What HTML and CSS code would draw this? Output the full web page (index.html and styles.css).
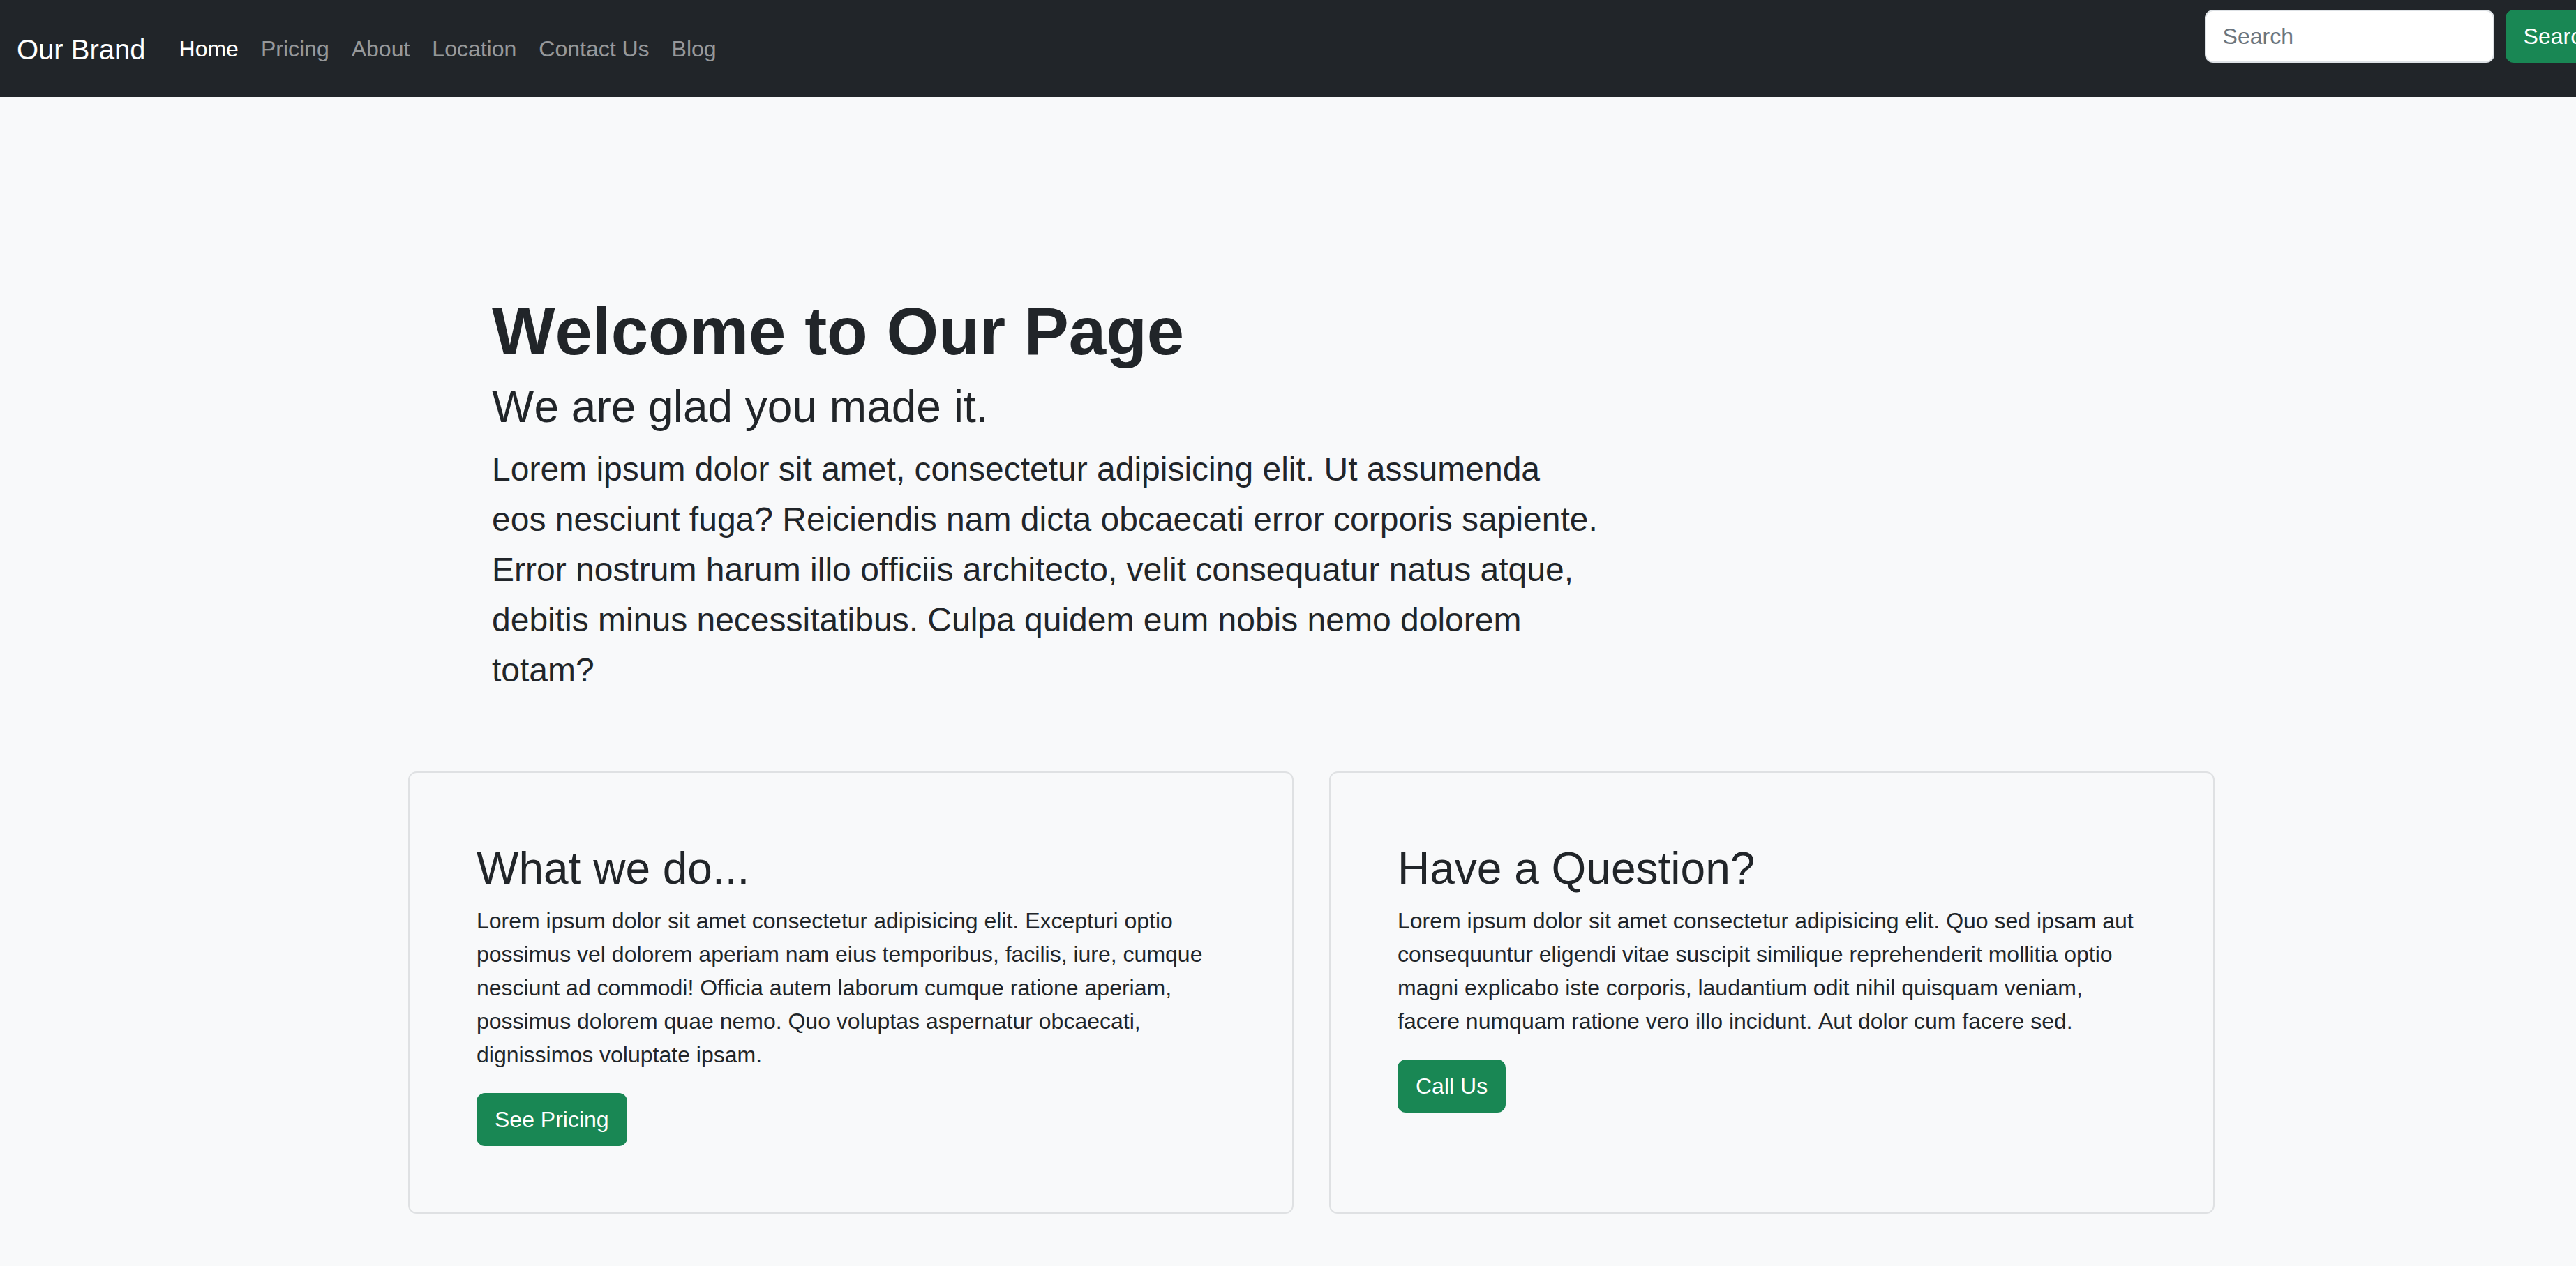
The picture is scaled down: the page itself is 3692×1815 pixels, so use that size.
FILE: index.html
```html
<!DOCTYPE html>
<html lang="en">
<head>
<meta charset="utf-8">
<title>Our Brand</title>
<link rel="stylesheet" href="styles.css">
</head>
<body>
<div class="page">
  <nav class="navbar">
    <a class="brand" href="#">Our Brand</a>
    <ul class="nav">
      <li><a class="nav-link active" href="#">Home</a></li>
      <li><a class="nav-link" href="#">Pricing</a></li>
      <li><a class="nav-link" href="#">About</a></li>
      <li><a class="nav-link" href="#">Location</a></li>
      <li><a class="nav-link" href="#">Contact Us</a></li>
      <li><a class="nav-link" href="#">Blog</a></li>
    </ul>
    <form class="search">
      <input class="search-input" type="text" placeholder="Search">
      <button class="btn btn-success" type="submit">Search</button>
    </form>
  </nav>

  <main class="container">
    <section class="hero">
      <h1 class="hero-title">Welcome to Our Page</h1>
      <h2 class="hero-subtitle">We are glad you made it.</h2>
      <p class="lead">Lorem ipsum dolor sit amet, consectetur adipisicing elit. Ut assumenda eos nesciunt fuga? Reiciendis nam dicta obcaecati error corporis sapiente. Error nostrum harum illo officiis architecto, velit consequatur natus atque, debitis minus necessitatibus. Culpa quidem eum nobis nemo dolorem totam?</p>
    </section>

    <section class="cards">
      <article class="card">
        <div class="card-body">
          <h2 class="card-title">What we do...</h2>
          <p class="card-text">Lorem ipsum dolor sit amet consectetur adipisicing elit. Excepturi optio possimus vel dolorem aperiam nam eius temporibus, facilis, iure, cumque nesciunt ad commodi! Officia autem laborum cumque ratione aperiam, possimus dolorem quae nemo. Quo voluptas aspernatur obcaecati, dignissimos voluptate ipsam.</p>
          <a class="btn btn-success" href="#">See Pricing</a>
        </div>
      </article>
      <article class="card">
        <div class="card-body">
          <h2 class="card-title">Have a Question?</h2>
          <p class="card-text">Lorem ipsum dolor sit amet consectetur adipisicing elit. Quo sed ipsam aut consequuntur eligendi vitae suscipit similique reprehenderit mollitia optio magni explicabo iste corporis, laudantium odit nihil quisquam veniam, facere numquam ratione vero illo incidunt. Aut dolor cum facere sed.</p>
          <a class="btn btn-success" href="#">Call Us</a>
        </div>
      </article>
    </section>
  </main>
</div>
</body>
</html>
```

FILE: styles.css
```css
html {
  overflow: hidden;
}

body {
  margin: 0;
  background: #f8f9fa;
  color: #212529;
  font-family: "Liberation Sans", Arial, sans-serif;
  font-kerning: none;
}

.page {
  width: 3762px;
}

/* ---------- navbar ---------- */
.navbar {
  display: flex;
  align-items: flex-start;
  height: 139px;
  padding: 0 18px 0 24px;
  box-sizing: border-box;
  background: #212529;
}

.brand {
  margin-top: 41px;
  margin-right: 32px;
  font-size: 40px;
  line-height: 60px;
  color: #fff;
  text-decoration: none;
  white-space: nowrap;
}

.nav {
  display: flex;
  margin: 46px 0 0;
  padding: 0;
  list-style: none;
}

.nav-link {
  display: block;
  padding: 0 16px;
  font-size: 32px;
  line-height: 48px;
  color: rgba(255, 255, 255, 0.55);
  text-decoration: none;
  white-space: nowrap;
}

.nav-link.active {
  color: #fff;
}

.search {
  display: flex;
  gap: 16px;
  margin: 14px 0 0 auto;
}

.search-input {
  width: 415px;
  height: 76px;
  box-sizing: border-box;
  padding: 0 24px;
  border: 2px solid #dee2e6;
  border-radius: 12px;
  background: #fff;
  font-family: inherit;
  font-size: 32px;
  color: #212529;
  outline: none;
}

.search-input::placeholder {
  color: #6c757d;
}

/* ---------- buttons ---------- */
.btn {
  display: inline-block;
  height: 76px;
  box-sizing: border-box;
  padding: 12px 24px;
  border: 2px solid transparent;
  border-radius: 12px;
  font-family: inherit;
  font-size: 32px;
  line-height: 48px;
  text-decoration: none;
  white-space: nowrap;
  cursor: pointer;
}

.btn-success {
  background: #198754;
  border-color: #198754;
  color: #fff;
}

/* ---------- main ---------- */
.container {
  width: 2592px;
  margin: 0 auto;
}

.hero {
  padding: 278px 0 0 120px;
}

.hero-title {
  margin: 0 0 13px;
  font-size: 96px;
  font-weight: 700;
  line-height: 1.2;
}

.hero-subtitle {
  margin: 0 0 15px;
  font-size: 64px;
  font-weight: 400;
  line-height: 1.2;
}

.lead {
  width: 1589px;
  margin: 0;
  font-size: 48px;
  line-height: 72px;
}

/* ---------- cards ---------- */
.cards {
  display: grid;
  grid-template-columns: 1269px 1269px;
  column-gap: 51px;
  margin-top: 109px;
}

.card {
  border: 2px solid #dfe1e3;
  border-radius: 12px;
  background: #f8f9fa;
}

.card-body {
  padding: 99px 100px 95px 96px;
}

.card-title {
  margin: 0 0 12px;
  font-size: 64px;
  font-weight: 400;
  line-height: 1.2;
}

.card-text {
  margin: 0 0 31px;
  font-size: 32px;
  line-height: 48px;
}
```
